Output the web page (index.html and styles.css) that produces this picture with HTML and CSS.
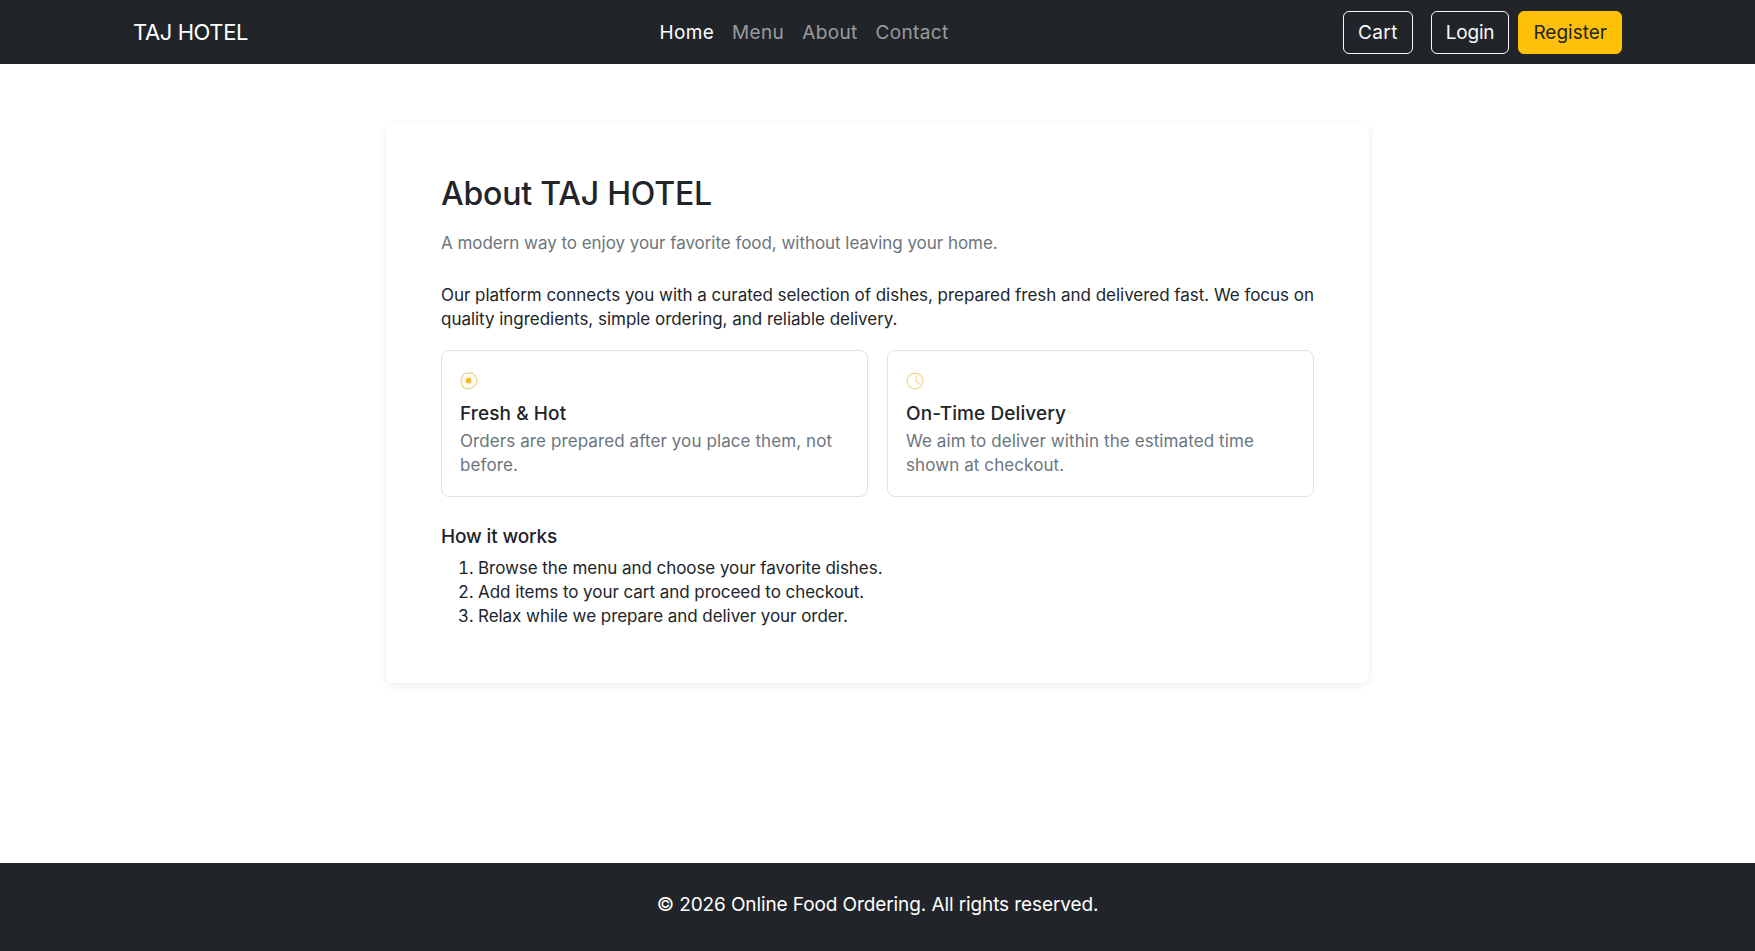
FILE: index.html
```html
<!DOCTYPE html>
<html lang="en">
<head>
    <meta charset="UTF-8">
    <meta name="viewport" content="width=device-width, initial-scale=1.0">
    <title>About - TAJ HOTEL</title>
    <link rel="stylesheet" href="styles.css">
</head>
<body>
    <!-- Navbar -->
    <nav class="navbar">
        <a class="brand" href="#">TAJ HOTEL</a>
        <ul class="nav-links">
            <li><a class="nav-link active" href="#">Home</a></li>
            <li><a class="nav-link" href="#">Menu</a></li>
            <li><a class="nav-link" href="#">About</a></li>
            <li><a class="nav-link" href="#">Contact</a></li>
        </ul>
        <div class="nav-actions">
            <a class="btn btn-outline cart-btn" href="#">Cart</a>
            <a class="btn btn-outline login-btn" href="#">Login</a>
            <a class="btn btn-yellow" href="#">Register</a>
        </div>
    </nav>

    <!-- About Card -->
    <main class="content">
        <section class="about-card">
            <h1>About TAJ HOTEL</h1>
            <p class="lead">A modern way to enjoy your favorite food, without leaving your home.</p>
            <p class="intro">Our platform connects you with a curated selection of dishes, prepared fresh and delivered fast. We focus on quality ingredients, simple ordering, and reliable delivery.</p>

            <div class="features">
                <div class="feature">
                    <svg class="feature-icon" viewBox="0 0 18 18" aria-hidden="true">
                        <path class="egg-white" d="M3.2 2.6Q4 1.2 6 1.2L11 .9Q12.6.9 13.6 2.2L16.2 5.6Q17 6.8 16.9 8.2L16.5 11.4Q16.3 12.8 15 13.6L11.2 16.2Q10 17 8.6 16.8L4.6 16.1Q3.2 15.8 2.6 14.6L1.2 10.6Q.8 9.2 1.2 7.8z"/>
                        <circle class="egg-yolk" cx="8.6" cy="8.6" r="2.9"/>
                    </svg>
                    <h3>Fresh &amp; Hot</h3>
                    <p>Orders are prepared after you place them, not before.</p>
                </div>
                <div class="feature">
                    <svg class="feature-icon" viewBox="0 0 18 18" aria-hidden="true">
                        <circle class="clock-face" cx="9" cy="9" r="7.9"/>
                        <path class="clock-hands" d="M10 3.4 10.6 9.6 14.2 12.6"/>
                    </svg>
                    <h3>On-Time Delivery</h3>
                    <p>We aim to deliver within the estimated time shown at checkout.</p>
                </div>
            </div>

            <h2>How it works</h2>
            <ol class="steps">
                <li>Browse the menu and choose your favorite dishes.</li>
                <li>Add items to your cart and proceed to checkout.</li>
                <li>Relax while we prepare and deliver your order.</li>
            </ol>
        </section>
    </main>

    <!-- Footer -->
    <footer class="footer">© 2026 Online Food Ordering. All rights reserved.</footer>
</body>
</html>
```

FILE: styles.css
```css
/* General Styling */
* {
    box-sizing: border-box;
}

body {
    font-family: 'Inter', 'Liberation Sans', sans-serif;
    background: #fff;
    color: #212529;
    display: flex;
    flex-direction: column;
    margin: 0;
    min-height: 951px;
}

a {
    text-decoration: none;
}

/* Navbar */
.navbar {
    display: flex;
    align-items: center;
    height: 64px;
    padding: 0 133px;
    background: #212529;
}

.brand {
    color: #fff;
    font-size: 22px;
    font-weight: 400;
    letter-spacing: -0.4px;
}

.nav-links {
    display: flex;
    gap: 18px;
    list-style: none;
    margin: 0 auto;
    padding: 0 0 0 17px;
}

.nav-link {
    color: rgba(255, 255, 255, 0.55);
    font-size: 19px;
    letter-spacing: 0.35px;
}

.nav-link.active {
    color: #fff;
}

.nav-actions {
    display: flex;
    gap: 9px;
}

.btn {
    display: block;
    height: 43px;
    padding: 0 14px;
    border: 1px solid #f8f9fa;
    border-radius: 6px;
    font-size: 19px;
    line-height: 41px;
}

.btn-outline {
    color: #f8f9fa;
}

.cart-btn {
    margin-right: 9px;
    letter-spacing: 0.4px;
}

.login-btn {
    letter-spacing: -0.2px;
}

.btn-yellow {
    background: #ffc107;
    border-color: #ffc107;
    color: #212529;
}

/* About Card */
.content {
    flex: 1;
    padding: 60px 0 0 386px;
}

.about-card {
    width: 983px;
    height: 559px;
    padding: 47px 55px;
    border-radius: 8px;
    background: #fff;
    box-shadow: 0 2px 8px rgba(0, 0, 0, 0.08);
}

h1 {
    margin: 0 0 14px;
    font-size: 32px;
    font-weight: 500;
    letter-spacing: -0.2px;
    line-height: 46px;
}

.lead {
    margin: 0 0 28px;
    color: #6c757d;
    font-size: 17px;
    letter-spacing: -0.04px;
    line-height: 24px;
}

.intro {
    margin: 0 0 19px;
    font-size: 17px;
    letter-spacing: -0.03px;
    line-height: 24px;
}

/* Feature Boxes */
.features {
    display: grid;
    grid-template-columns: 1fr 1fr;
    gap: 19px;
    margin-bottom: 26px;
}

.feature {
    height: 147px;
    padding: 21px 18px;
    border: 1px solid #dee2e6;
    border-radius: 8px;
}

.feature-icon {
    display: block;
    width: 18px;
    height: 18px;
    margin-bottom: 10px;
}

.egg-white {
    fill: #fffaf0;
    stroke: #ecd08c;
    stroke-width: 1.1;
}

.egg-yolk {
    fill: #f5b82e;
}

.clock-face,
.clock-hands {
    fill: none;
    stroke: #efd68e;
    stroke-width: 1.1;
}

h3 {
    margin: 0 0 2px;
    font-size: 19px;
    font-weight: 500;
    letter-spacing: 0.1px;
    line-height: 27px;
}

.feature p {
    margin: 0;
    color: #6c757d;
    font-size: 17px;
    letter-spacing: 0.09px;
    line-height: 24px;
}

/* Steps */
h2 {
    margin: 0 0 6px;
    font-size: 19px;
    font-weight: 500;
    letter-spacing: -0.15px;
    line-height: 27px;
}

.steps {
    margin: 0;
    padding-left: 37px;
    font-size: 17px;
    letter-spacing: -0.05px;
    line-height: 24px;
}

/* Footer */
.footer {
    height: 88px;
    background: #212529;
    color: #fff;
    font-size: 19px;
    letter-spacing: -0.1px;
    line-height: 84px;
    text-align: center;
}
```
